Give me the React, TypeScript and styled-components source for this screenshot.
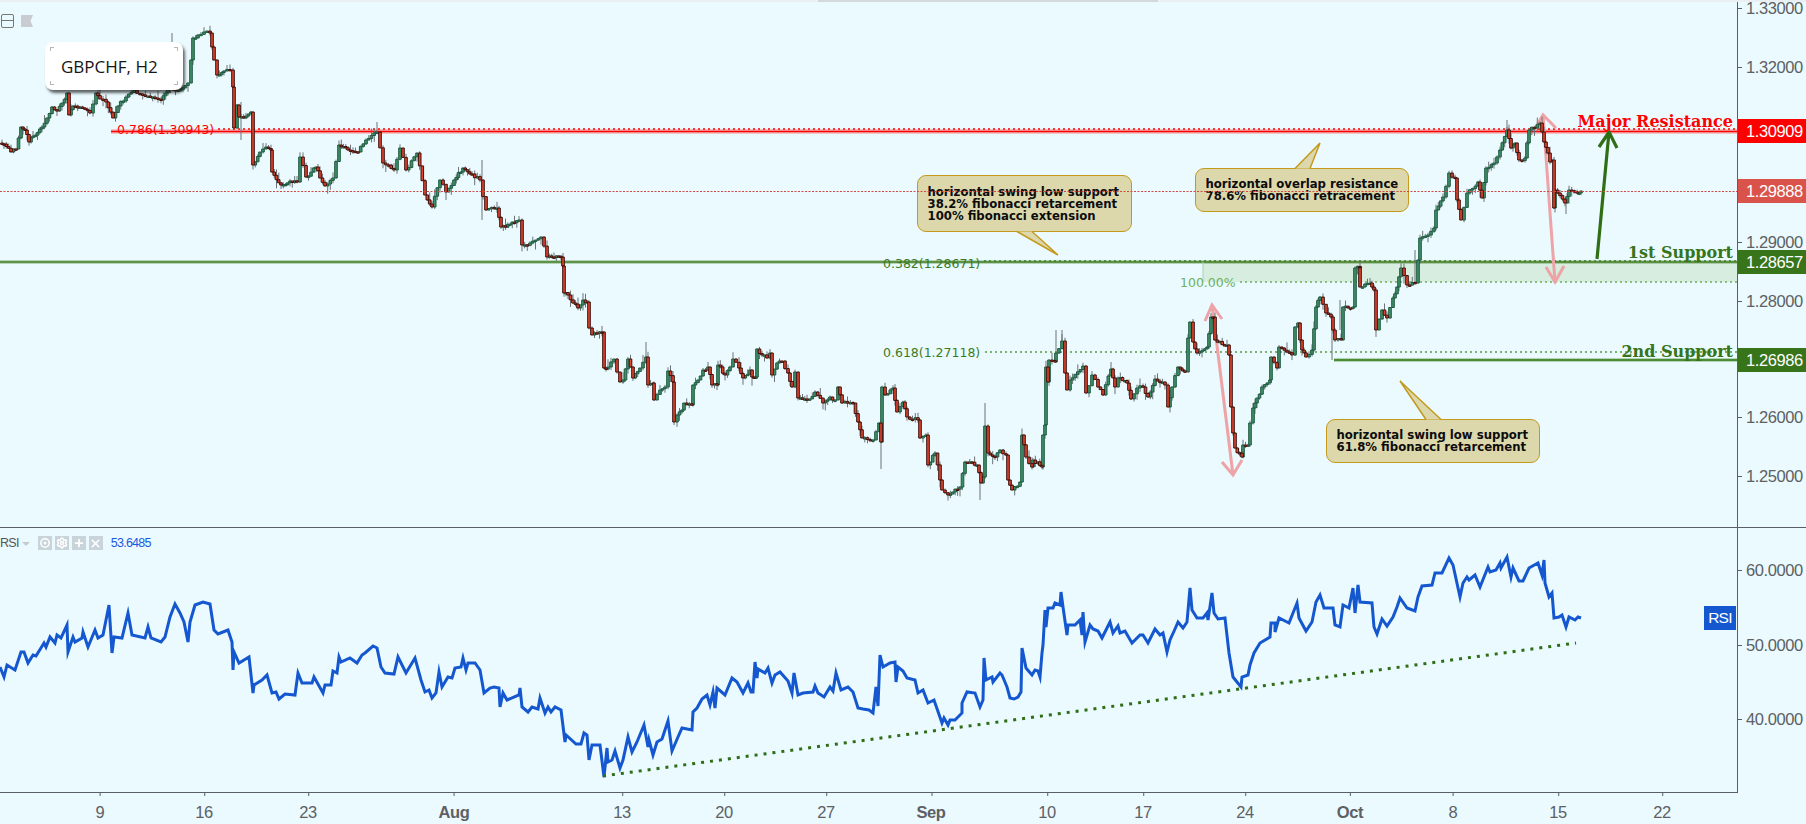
import React, { useMemo } from "react";
import styled, { createGlobalStyle } from "styled-components";
import { Plus, X, Settings } from "lucide-react";

const P: number[] = [0,143,4,144,11,152,16,149,21,127,25,130,29,142,33,136,42,127,47,118,52,107,57,111,62,103,67,93,69,115,73,106,80,107,90,113,93,104,96,93,100,99,106,102,113,118,118,106,126,97,134,90,140,94,148,96,155,98,161,100,168,87,178,90,188,83,191,60,193,38,198,35,204,32,210,33,214,60,217,75,224,71,230,70,233,87,234,128,237,105,239,117,246,116,251,112,253,165,260,152,266,147,271,150,272,172,281,185,290,181,297,182,300,157,306,177,316,167,320,178,325,186,333,178,339,145,348,150,358,152,366,140,377,132,383,163,394,170,400,148,406,170,417,153,425,195,432,207,440,180,446,192,454,180,463,168,472,174,480,180,486,210,497,208,501,227,510,224,519,220,522,245,530,243,541,237,547,257,561,257,563,266,564,293,568,295,573,303,578,308,583,300,588,302,589,328,592,335,597,333,602,332,604,368,608,367,614,359,617,372,620,382,623,380,628,359,633,378,640,368,646,357,648,385,653,383,654,400,660,390,665,387,668,371,673,382,674,422,677,415,682,410,684,403,692,405,693,385,698,380,703,370,708,367,712,385,717,385,718,365,725,375,730,367,733,359,739,368,743,378,750,370,752,377,756,377,757,349,762,355,767,358,770,353,772,375,777,363,782,361,788,373,792,387,795,372,798,398,807,400,815,392,823,403,830,397,835,400,838,387,842,403,853,403,858,422,862,438,873,440,879,423,881,442,882,387,885,395,893,388,897,412,903,402,907,417,918,420,920,438,926,435,928,465,935,453,940,480,942,490,948,495,960,487,965,462,977,465,981,483,983,477,985,426,988,453,995,457,1000,450,1006,455,1008,480,1012,490,1020,482,1022,435,1026,457,1032,467,1033,460,1042,467,1043,435,1045,425,1046,367,1048,382,1049,360,1055,362,1056,353,1062,341,1065,373,1067,390,1070,380,1083,366,1086,393,1092,375,1098,387,1103,395,1111,369,1115,387,1118,378,1127,383,1131,399,1137,388,1143,387,1148,397,1155,379,1165,385,1168,407,1172,387,1178,367,1185,372,1188,338,1190,322,1193,342,1197,353,1207,347,1211,317,1213,317,1215,340,1227,345,1229,355,1231,407,1233,433,1235,448,1242,457,1243,445,1248,445,1250,423,1253,408,1257,398,1262,387,1270,380,1271,357,1277,368,1279,347,1287,352,1292,355,1295,327,1298,323,1300,340,1302,350,1306,357,1312,350,1316,307,1320,297,1326,313,1331,317,1335,340,1341,340,1343,307,1353,307,1355,268,1360,267,1360,287,1370,283,1374,290,1376,330,1382,310,1387,318,1393,298,1397,287,1401,268,1407,285,1415,283,1418,260,1420,238,1428,235,1434,228,1436,210,1443,197,1449,173,1455,178,1457,200,1461,220,1467,193,1478,182,1482,198,1486,168,1494,163,1500,150,1507,130,1511,148,1515,143,1519,160,1525,158,1529,130,1540,123,1544,142,1548,153,1550,162,1552,160,1554,208,1555,190,1565,203,1569,190,1577,193,1581,191];

const R: number[] = [0,667,4,677,7,665,15,670,21,652,24,652,28,663,33,655,36,656,44,643,46,647,50,637,55,643,57,635,61,638,67,625,68,652,73,637,75,642,82,638,83,632,88,647,95,630,98,638,103,635,109,605,112,653,114,637,122,638,128,613,132,635,145,638,148,627,151,638,161,642,165,637,170,617,175,604,180,613,184,622,188,642,190,622,195,605,203,602,210,604,214,630,218,634,228,630,232,642,233,670,234,652,239,663,249,657,253,693,254,685,262,680,267,675,272,693,276,692,279,699,285,694,295,695,298,673,302,683,312,683,314,677,323,693,325,685,331,685,333,671,337,673,339,657,341,662,350,658,357,663,362,655,365,653,373,646,377,648,381,667,385,673,394,674,398,657,406,673,415,658,421,680,425,692,429,690,432,698,436,693,439,672,442,687,448,677,452,678,455,668,461,667,463,658,466,670,468,663,475,663,480,670,484,693,490,688,494,687,499,688,500,707,503,693,507,700,519,695,520,688,522,707,528,712,532,707,538,709,540,698,545,713,548,707,551,712,555,707,561,710,565,742,566,735,576,744,581,744,584,733,587,735,589,760,592,745,600,745,604,777,607,748,608,762,612,760,615,751,620,768,623,760,628,737,632,752,637,742,644,725,648,747,649,740,653,755,657,742,662,739,668,721,672,751,678,737,682,728,692,730,693,712,697,708,702,699,707,695,710,705,713,692,715,708,717,688,725,695,732,678,737,682,743,693,748,683,751,692,753,692,755,662,757,678,758,669,765,673,768,668,772,683,775,675,780,672,788,681,792,693,794,673,798,695,803,693,813,692,815,686,818,693,824,697,830,687,833,691,836,673,841,690,848,687,853,692,858,708,863,709,869,710,873,713,876,687,878,706,880,655,883,667,890,663,895,662,896,682,898,667,903,671,907,678,915,680,918,693,923,690,928,703,934,700,942,723,944,718,948,725,950,720,955,720,962,713,962,703,967,692,975,693,980,707,983,700,984,658,986,680,992,677,993,682,1000,673,1002,675,1007,687,1010,698,1014,699,1018,697,1021,692,1022,648,1026,668,1032,675,1035,670,1038,671,1040,677,1042,653,1043,645,1045,610,1046,627,1048,608,1053,608,1055,603,1060,605,1061,592,1063,607,1067,635,1068,625,1075,625,1080,620,1082,635,1083,612,1085,642,1090,625,1093,629,1098,631,1102,638,1110,622,1113,633,1118,626,1120,633,1125,631,1132,643,1140,635,1143,635,1148,643,1155,629,1160,635,1163,633,1167,652,1170,640,1175,629,1178,622,1183,628,1187,622,1190,588,1192,610,1197,618,1203,618,1207,613,1208,620,1212,593,1214,613,1218,619,1225,618,1229,653,1233,677,1241,687,1242,677,1248,675,1250,665,1254,653,1260,643,1270,637,1271,623,1275,623,1275,632,1279,618,1289,623,1297,603,1299,618,1306,631,1312,622,1316,602,1320,595,1324,608,1333,608,1335,625,1340,627,1343,605,1349,608,1353,588,1355,613,1358,585,1360,602,1372,603,1374,627,1377,634,1382,619,1387,626,1393,617,1397,607,1400,598,1407,608,1415,611,1418,597,1422,586,1432,585,1435,573,1442,573,1449,558,1453,565,1460,597,1463,583,1467,577,1469,580,1475,575,1480,587,1488,567,1490,572,1496,570,1500,563,1501,568,1507,557,1511,577,1513,568,1519,581,1523,581,1529,568,1538,563,1542,575,1544,560,1545,583,1549,597,1552,593,1554,618,1559,617,1562,615,1566,627,1569,617,1575,620,1578,617,1581,618];

const LONG_WICKS = [[881,442,469],[646,342,358],[985,403,426],[980,483,500],[482,160,220],[172,33,60],[377,122,132],[241,102,140],[1332,320,360],[1056,330,353],[1062,330,341],[1415,250,283],[1507,120,130],[1566,203,214],[1340,300,330]];

const rng = (seed: number) => () => {
  seed = (seed + 0x6d2b79f5) | 0;
  let t = Math.imul(seed ^ (seed >>> 15), 1 | seed);
  t = (t + Math.imul(t ^ (t >>> 7), 61 | t)) ^ t;
  return ((t ^ (t >>> 14)) >>> 0) / 4294967296;
};

function buildCandles() {
  const rand = rng(42);
  let wicks = "", ups = "", downs = "";
  const bar = (x: number, a: number, b: number) => {
    const top = Math.min(a, b), h = Math.max(Math.abs(a - b), 1.4);
    return `M${(x - 1.3).toFixed(1)} ${top.toFixed(1)}h2.6v${h.toFixed(1)}h-2.6z`;
  };
  let open = P[1];
  for (let i = 2; i < P.length; i += 2) {
    const x0 = P[i - 2], y0 = P[i - 1], x1 = P[i], y1 = P[i + 1];
    const n = Math.max(1, Math.round((x1 - x0) / 2.5));
    for (let k = 1; k <= n; k++) {
      const t = k / n;
      const x = x0 + (x1 - x0) * t;
      const close = y0 + (y1 - y0) * t + (k < n ? (rand() - 0.5) * 3.5 : 0);
      const hi = Math.min(open, close) - rand() * rand() * 9;
      const lo = Math.max(open, close) + rand() * rand() * 9;
      wicks += `M${x.toFixed(1)} ${hi.toFixed(1)}V${lo.toFixed(1)}`;
      if (close < open) ups += bar(x, open, close);
      else downs += bar(x, open, close);
      open = close;
    }
  }
  LONG_WICKS.forEach(([x, a, b]) => { wicks += `M${x} ${a}V${b}`; });
  return { wicks, ups, downs };
}

const points = (a: number[]) => {
  const out: string[] = [];
  for (let i = 0; i < a.length; i += 2) out.push(`${a[i]},${a[i + 1]}`);
  return out.join(" ");
};

const GlobalStyle = createGlobalStyle`
  html, body { margin: 0; padding: 0; background: #eafaff; overflow: hidden; }
  #root { width: 1806px; height: 824px; }
`;

const Page = styled.div`
  position: relative;
  width: 1806px;
  height: 824px;
  background: #eafaff;
  display: flex;
  flex-direction: column;
  font-family: "Liberation Sans", Arial, sans-serif;
  overflow: hidden;
`;
const TopEdge = styled.div`
  position: absolute;
  inset: 0 0 auto 0;
  height: 2px;
  background: #eaeff3;
  z-index: 9;
`;
const TopEdgeDark = styled.div`
  position: absolute;
  top: 0;
  left: 818px;
  width: 340px;
  height: 2px;
  background: #d4d9dd;
  z-index: 10;
`;
const Pane = styled.section<{ $h: number; $line?: boolean }>`
  display: flex;
  height: ${(p) => p.$h}px;
  flex: none;
  box-sizing: border-box;
  border-bottom: ${(p) => (p.$line ? "1px solid #5a5f66" : "none")};
`;
const Canvas = styled.div`
  position: relative;
  flex: none;
  width: 1737px;
  height: 100%;
  overflow: hidden;
`;
const Layer = styled.svg<{ $z?: number }>`
  position: absolute;
  inset: 0;
  width: 100%;
  height: 100%;
  z-index: ${(p) => p.$z ?? 1};
  pointer-events: none;
`;
const AxisColumn = styled.div`
  position: relative;
  flex: none;
  width: 69px;
  height: 100%;
  box-sizing: border-box;
  border-left: 1px solid #5a5f66;
`;
const AxisLabel = styled.span<{ $y: number }>`
  position: absolute;
  left: 8px;
  top: ${(p) => p.$y}px;
  transform: translateY(-50%);
  font-size: 16.5px;
  letter-spacing: -0.4px;
  line-height: 18px;
  color: #5d6064;
  white-space: nowrap;
  &::before {
    content: "";
    position: absolute;
    left: -8px;
    top: 9px;
    width: 4px;
    height: 1px;
    background: #5a5f66;
  }
`;
const PriceTag = styled.span<{ $y: number; $bg: string }>`
  position: absolute;
  left: 0;
  top: ${(p) => p.$y - 12}px;
  width: 69px;
  height: 24px;
  box-sizing: border-box;
  padding-left: 8px;
  background: ${(p) => p.$bg};
  color: #fff;
  font-size: 16.5px;
  letter-spacing: -0.4px;
  line-height: 24px;
  white-space: nowrap;
`;
const SymbolCard = styled.div`
  position: absolute;
  left: 45px;
  top: 42px;
  width: 138px;
  height: 48px;
  box-sizing: border-box;
  padding-left: 16px;
  background: #fff;
  border-radius: 8px;
  box-shadow: 2px 3px 3px rgba(20, 20, 20, 0.65);
  display: flex;
  align-items: center;
  font-family: "Open Sans", sans-serif;
  font-size: 17px;
  color: #161616;
  z-index: 5;
`;
const Corner = styled.i<{ $pos: string }>`
  position: absolute;
  width: 3px;
  height: 3px;
  border: 0 solid #b7b7b7;
  ${(p) => p.$pos}
`;
const CollapseBox = styled.div`
  position: absolute;
  left: 1px;
  top: 14px;
  width: 11px;
  height: 12px;
  border: 1px solid #777;
  border-radius: 2px;
  z-index: 5;
  &::after {
    content: "";
    position: absolute;
    left: 0;
    right: 0;
    top: 5px;
    height: 1px;
    background: #777;
  }
`;
const FlagIcon = styled.svg`
  position: absolute;
  left: 21px;
  top: 15px;
  width: 12px;
  height: 12px;
  z-index: 5;
`;
const Callout = styled.div<{ $x: number; $y: number; $w: number; $h: number }>`
  position: absolute;
  left: ${(p) => p.$x}px;
  top: ${(p) => p.$y}px;
  width: ${(p) => p.$w}px;
  height: ${(p) => p.$h}px;
  box-sizing: border-box;
  padding-left: 9.5px;
  background: #dcd8ac;
  border: 1.5px solid #c49a1e;
  border-radius: 9px;
  display: flex;
  flex-direction: column;
  justify-content: center;
  font-family: "DejaVu Sans", sans-serif;
  font-weight: 700;
  font-size: 11.7px;
  line-height: 12px;
  color: #0c0c0c;
  white-space: nowrap;
  z-index: 3;
`;
const CalloutTail = styled.svg<{ $x: number; $y: number; $w: number; $h: number }>`
  position: absolute;
  left: ${(p) => p.$x}px;
  top: ${(p) => p.$y}px;
  width: ${(p) => p.$w}px;
  height: ${(p) => p.$h}px;
  overflow: visible;
  z-index: 4;
`;
const FibText = styled.span<{ $x: number; $y: number; $c: string }>`
  position: absolute;
  left: ${(p) => p.$x}px;
  top: ${(p) => p.$y}px;
  transform: translateY(-50%);
  font-family: "DejaVu Sans", sans-serif;
  font-size: 12.5px;
  line-height: 16px;
  color: ${(p) => p.$c};
  white-space: nowrap;
  z-index: 2;
`;
const LevelText = styled.span<{ $y: number; $c: string }>`
  position: absolute;
  right: 4px;
  top: ${(p) => p.$y}px;
  transform: translateY(-50%);
  font-family: "DejaVu Serif", serif;
  font-weight: 700;
  font-size: 16px;
  line-height: 18px;
  color: ${(p) => p.$c};
  white-space: nowrap;
  z-index: 7;
`;
const Legend = styled.div`
  position: absolute;
  left: 0;
  top: 8px;
  height: 14px;
  display: flex;
  align-items: center;
  z-index: 5;
`;
const LegendName = styled.span`
  font-size: 12.5px;
  color: #555;
  letter-spacing: -0.7px;
`;
const Caret = styled.i`
  width: 0;
  height: 0;
  margin: 1px 8px 0 3px;
  border-left: 4px solid transparent;
  border-right: 4px solid transparent;
  border-top: 4px solid #c4cace;
`;
const LegendButton = styled.span`
  width: 14px;
  height: 14px;
  margin-right: 3px;
  background: #c9d3da;
  display: flex;
  align-items: center;
  justify-content: center;
`;
const LegendValue = styled.span`
  margin-left: 5px;
  font-size: 12.5px;
  color: #1c58df;
  letter-spacing: -0.75px;
`;
const RsiBadge = styled.span`
  position: absolute;
  left: 1704px;
  top: 78px;
  width: 32px;
  height: 24px;
  background: #1557cf;
  color: #fff;
  font-size: 15.5px;
  letter-spacing: -0.7px;
  line-height: 24px;
  text-align: center;
  z-index: 5;
`;
const TimeAxis = styled.footer`
  position: relative;
  flex: none;
  width: 1738px;
  height: 32px;
  box-sizing: border-box;
  border-top: 1px solid #5a5f66;
`;
const TimeTick = styled.span<{ $x: number; $bold?: boolean }>`
  position: absolute;
  left: ${(p) => p.$x}px;
  top: 9px;
  transform: translateX(-50%);
  font-size: 16.5px;
  letter-spacing: -0.4px;
  line-height: 20px;
  font-weight: ${(p) => (p.$bold ? 700 : 400)};
  color: #5d6064;
  &::before {
    content: "";
    position: absolute;
    left: 50%;
    top: -9px;
    width: 1px;
    height: 3px;
    background: #5a5f66;
  }
`;

const PRICE_LABELS: [string, number][] = [["1.33000", 8], ["1.32000", 67], ["1.29000", 242], ["1.28000", 301], ["1.26000", 417], ["1.25000", 476]];
const PRICE_TAGS: [string, number, string][] = [["1.30909", 131, "#ff0000"], ["1.29888", 191, "#d9534a"], ["1.28657", 262, "#37741a"], ["1.26986", 360, "#37741a"]];
const TICKS: [string, number, boolean?][] = [["9", 100], ["16", 204], ["23", 308], ["Aug", 454, true], ["13", 622], ["20", 724], ["27", 826], ["Sep", 931, true], ["10", 1047], ["17", 1143], ["24", 1245], ["Oct", 1350, true], ["8", 1453], ["15", 1558], ["22", 1662]];

const RED = "#ff0000", GREEN = "#3f7d20", PINK = "#eea3a6";

const Arrow = ({ d, c, w }: { d: string; c: string; w: number }) => (
  <path d={d} fill="none" stroke={c} strokeWidth={w} />
);

const Tail = ({ x, y, w, h, pts }: { x: number; y: number; w: number; h: number; pts: string }) => (
  <CalloutTail $x={x} $y={y} $w={w} $h={h} viewBox={`0 0 ${w} ${h}`}>
    <polyline points={pts} fill="#dcd8ac" stroke="#c49a1e" strokeWidth="1.5" />
  </CalloutTail>
);

export default function App() {
  const c = useMemo(buildCandles, []);
  return (
    <Page>
      <GlobalStyle />
      <TopEdge />
      <TopEdgeDark />
      <Pane $h={528} $line>
        <Canvas>
          <CollapseBox />
          <FlagIcon viewBox="0 0 12 12"><path d="M0 0H12L9.5 6L12 12H0Z" fill="#c9cdd1" /></FlagIcon>
          <Layer $z={1} viewBox="0 0 1737 527">
            <rect x="1203" y="262" width="534" height="20" fill="#d6eddf" />
            <line x1="0" x2="1737" y1="262" y2="262" stroke={GREEN} strokeOpacity=".3" strokeWidth="4" />
            <line x1="0" x2="1737" y1="262" y2="262" stroke={GREEN} strokeWidth="1.6" />
            <line x1="984" x2="1737" y1="261" y2="261" stroke={GREEN} strokeWidth="1.6" strokeDasharray="2 3" />
            <line x1="1203" x2="1203" y1="262" y2="282" stroke="#a9d2b0" />
            <line x1="1240" x2="1737" y1="282" y2="282" stroke="#6fae5f" strokeWidth="1.6" strokeDasharray="2 3" />
            <line x1="985" x2="1737" y1="352" y2="352" stroke="#5b9a46" strokeWidth="1.6" strokeDasharray="2 3" />
            <line x1="1334" x2="1737" y1="360" y2="360" stroke="#4c8c33" strokeOpacity=".35" strokeWidth="4" />
            <line x1="1334" x2="1737" y1="360" y2="360" stroke="#4c8c33" strokeWidth="1.8" />
            <line x1="111" x2="1737" y1="131.5" y2="131.5" stroke={RED} strokeOpacity=".28" strokeWidth="4.5" />
            <line x1="111" x2="1737" y1="131.5" y2="131.5" stroke={RED} strokeWidth="1.6" />
            <line x1="218" x2="1737" y1="129" y2="129" stroke={RED} strokeWidth="1.6" strokeDasharray="2 3" />
            <Arrow c={PINK} w={3} d="M1212 305L1233 475M1205 321L1212 305L1222 319M1222 462L1233 475L1242 460" />
            <Arrow c={PINK} w={3} d="M1543 115L1555 282M1534 130L1543 115L1556 128M1546 267L1555 282L1564 266" />
            <Arrow c="#2f6e15" w={3.2} d="M1597 259L1609 132M1599 147L1609 132L1617 148" />
            <path d={c.wicks} stroke="#6d7276" strokeWidth="1" fill="none" />
            <path d={c.ups} fill="#3f8f68" stroke="#1e5a40" strokeWidth="1" />
            <path d={c.downs} fill="#e2452f" stroke="#3e0f0a" strokeWidth="1" />
          </Layer>
          <SymbolCard>
            <Corner $pos="left:5px;top:5px;border-top-width:1px;border-left-width:1px;" />
            <Corner $pos="right:5px;top:5px;border-top-width:1px;border-right-width:1px;" />
            <Corner $pos="left:5px;bottom:5px;border-bottom-width:1px;border-left-width:1px;" />
            <Corner $pos="right:5px;bottom:5px;border-bottom-width:1px;border-right-width:1px;" />
            GBPCHF, H2
          </SymbolCard>
          <FibText $x={117} $y={130} $c="#ff0000">0.786(1.30943)</FibText>
          <FibText $x={883} $y={264} $c="#3d7a1f">0.382(1.28671)</FibText>
          <FibText $x={883} $y={353} $c="#3d7a1f">0.618(1.27118)</FibText>
          <FibText $x={1180} $y={283} $c="#6fb05a">100.00%</FibText>
          <Callout $x={917} $y={175} $w={215} $h={57}>
            <span>horizontal swing low support</span>
            <span>38.2% fibonacci retarcement</span>
            <span>100% fibonacci extension</span>
          </Callout>
          <Tail x={1010} y={226} w={60} h={32} pts="7,5.5 48,29 22,5.5" />
          <Callout $x={1195} $y={168} $w={214} $h={44}>
            <span>horizontal overlap resistance</span>
            <span>78.6% fibonacci retracement</span>
          </Callout>
          <Tail x={1290} y={140} w={40} h={32} pts="5,28.5 30,3 20,28.5" />
          <Callout $x={1326} $y={419} $w={214} $h={44}>
            <span>horizontal swing low support</span>
            <span>61.8% fibonacci retarcement</span>
          </Callout>
          <Tail x={1395} y={378} w={50} h={45} pts="31,41.5 5,3 46,41.5" />
          <Layer $z={6} viewBox="0 0 1737 527">
            <line x1="0" x2="1737" y1="191.5" y2="191.5" stroke="#d4493f" strokeWidth="1" strokeDasharray="2 1.5" />
          </Layer>
          <LevelText $y={122} $c="#ff0000">Major Resistance</LevelText>
          <LevelText $y={253} $c="#37741a">1st Support</LevelText>
          <LevelText $y={352} $c="#37741a">2nd Support</LevelText>
        </Canvas>
        <AxisColumn>
          {PRICE_LABELS.map(([t, y]) => <AxisLabel key={t} $y={y}>{t}</AxisLabel>)}
          {PRICE_TAGS.map(([t, y, bg]) => <PriceTag key={t} $y={y} $bg={bg}>{t}</PriceTag>)}
        </AxisColumn>
      </Pane>
      <Pane $h={264}>
        <Canvas>
          <Legend>
            <LegendName>RSI</LegendName>
            <Caret />
            <LegendButton>
              <svg width="12" height="12" viewBox="0 0 12 12"><circle cx="6" cy="6" r="4.2" fill="none" stroke="#fff" strokeWidth="1.5" /><circle cx="6" cy="6" r="1.5" fill="#fff" /></svg>
            </LegendButton>
            <LegendButton><Settings size={12} color="#fff" strokeWidth={3} /></LegendButton>
            <LegendButton><Plus size={12} color="#fff" strokeWidth={3.5} /></LegendButton>
            <LegendButton><X size={13} color="#fff" strokeWidth={3} /></LegendButton>
            <LegendValue>53.6485</LegendValue>
          </Legend>
          <Layer $z={1} viewBox="0 528 1737 264">
            <polyline points={points(R)} fill="none" stroke="#1457cf" strokeWidth="3" strokeLinejoin="miter" strokeMiterlimit="6" />
            <line x1="603" y1="776" x2="1576" y2="643" stroke="#2f6e15" strokeWidth="3" strokeDasharray="3 6" />
          </Layer>
          <RsiBadge>RSI</RsiBadge>
        </Canvas>
        <AxisColumn>
          <AxisLabel $y={42}>60.0000</AxisLabel>
          <AxisLabel $y={117}>50.0000</AxisLabel>
          <AxisLabel $y={191}>40.0000</AxisLabel>
        </AxisColumn>
      </Pane>
      <TimeAxis>
        {TICKS.map(([t, x, b]) => <TimeTick key={t} $x={x} $bold={b}>{t}</TimeTick>)}
      </TimeAxis>
    </Page>
  );
}
